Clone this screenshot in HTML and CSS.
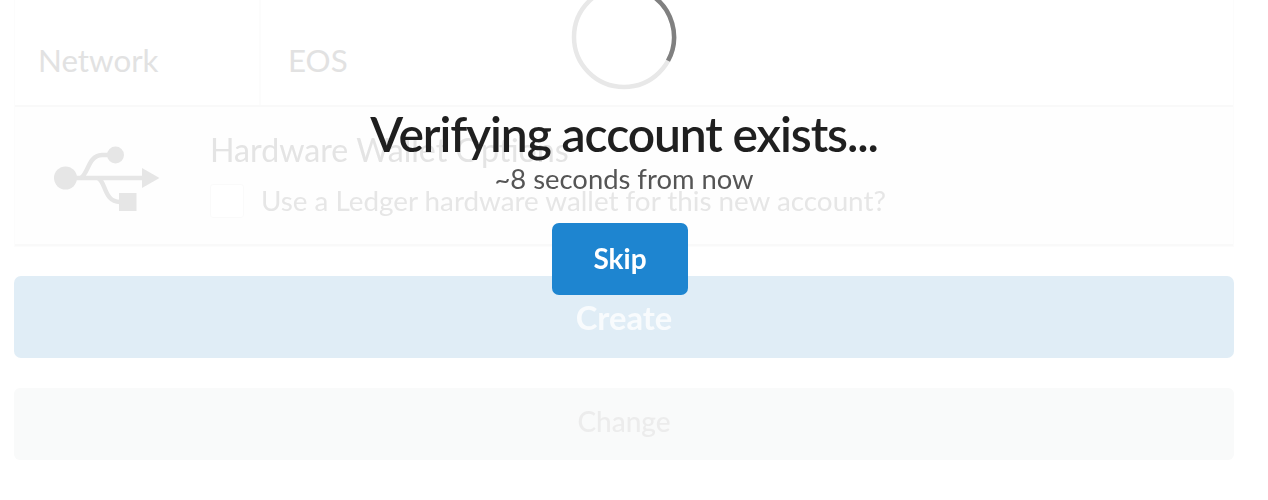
FILE: index.html
```html
<!DOCTYPE html>
<html lang="en">
<head>
<meta charset="utf-8">
<title>Verifying account</title>
<link rel="stylesheet" href="styles.css">
</head>
<body>
<main class="form">
  <section class="table">
    <div class="row row-network">
      <div class="cell-label">Network</div>
      <div class="cell-value">EOS</div>
    </div>
    <div class="row row-hardware">
      <div class="cell-icon">
        <svg class="usb" width="108" height="66" viewBox="0 0 108 66" aria-hidden="true">
          <circle cx="11.500" cy="32" r="11.500" fill="#e6e6e6"/>
          <circle cx="61.500" cy="9" r="8.500" fill="#e6e6e6"/>
          <rect x="65" y="47" width="17.500" height="18" fill="#e6e6e6"/>
          <path d="M88 22 L105.500 32 L88 42 Z" fill="#e6e6e6"/>
          <path d="M20 32 H90" stroke="#e6e6e6" stroke-width="4.500" fill="none"/>
          <path d="M27 32 C35 26 34 10 48 9 H56" stroke="#e6e6e6" stroke-width="4.500" fill="none"/>
          <path d="M44 32 C52 36 50 56 66 56" stroke="#e6e6e6" stroke-width="4.500" fill="none"/>
        </svg>
      </div>
      <div class="cell-hardware">
        <div class="hardware-title">Hardware Wallet Options</div>
        <label class="hardware-check"><span class="checkbox"></span><span>Use a Ledger hardware wallet for this new account?</span></label>
      </div>
    </div>
  </section>
  <div class="btn-create">Create</div>
  <div class="btn-change">Change</div>
</main>
<div class="overlay">
  <svg class="spinner" width="106" height="106" viewBox="0 0 106 106" aria-hidden="true">
    <circle cx="53" cy="53" r="50" fill="none" stroke="#e8e8e8" stroke-width="4.500"/>
    <path d="M 78 9.700 A 50 50 0 0 1 97 76.800" fill="none" stroke="#808080" stroke-width="4.500"/>
  </svg>
  <h1 class="title">Verifying account exists...</h1>
  <p class="subtitle">~8 seconds from now</p>
  <button class="skip" type="button">Skip</button>
</div>
</body>
</html>
```

FILE: styles.css
```css
* { box-sizing: border-box; }
html, body { margin: 0; height: 500px; overflow: hidden; background: #fff; }
body { font-family: Lato, "Open Sans", sans-serif; position: relative; }

.form { width: 1220px; margin-left: 14px; display: flex; flex-direction: column; filter: blur(0.5px); }
.table { border: 1px solid #fcfcfc; border-top: 0; background: #fff; height: 247px; }
.row { display: flex; }
.row-network { height: 107px; border-bottom: 2px solid #f9f9f9; }
.row-hardware { height: 139px; background: #fefefe; border-bottom: 2px solid #f9f9f9; }

.cell-label { width: 246px; padding: 42px 0 0 23px; font-size: 31.300px; line-height: 36px; color: #e2e2e2; border-right: 2px solid #fcfcfc; }
.cell-value { padding: 42px 0 0 27px; font-size: 31.300px; line-height: 36px; color: #e2e2e2; }

.cell-icon { width: 195px; padding: 39px 0 0 39px; }
.usb { display: block; }
.cell-hardware { padding: 24px 0 0 0; }
.hardware-title { font-size: 32.200px; line-height: 38px; color: #e4e4e4; }
.hardware-check { display: flex; align-items: center; gap: 17px; margin-top: 15px; font-size: 27.800px; line-height: 34px; color: #e6e6e6; }
.checkbox { width: 34px; height: 34px; border: 1px solid #fafafa; border-radius: 3px; background: #fff; }

.btn-create { margin-top: 29px; height: 82px; background: #e0edf6; border-radius: 7px; color: #f8fbfd; font-size: 32.700px; font-weight: 700; line-height: 84px; text-align: center; }
.btn-change { margin-top: 30px; height: 72px; background: #f9fafa; border-radius: 6px; color: #ececec; font-size: 28px; font-weight: 500; line-height: 66px; text-align: center; }

.overlay { position: absolute; top: 0; left: 0; width: 1248px; height: 500px; display: flex; flex-direction: column; align-items: center; }
.spinner { display: block; margin-top: -16px; flex: none; }
.title { margin: 14px 0 0; font-size: 48px; font-weight: 600; line-height: 60px; letter-spacing: -1.100px; color: #1f1f1f; white-space: nowrap; }
.subtitle { margin: 0; font-size: 27.400px; line-height: 30px; color: #555; white-space: nowrap; }
.skip { margin: 29px 8px 0 0; width: 136px; height: 72px; border: 0; border-radius: 7px; background: #1e85d0; color: #fff; font-family: inherit; font-size: 28px; font-weight: 700; padding: 0 0 3px; }
```
